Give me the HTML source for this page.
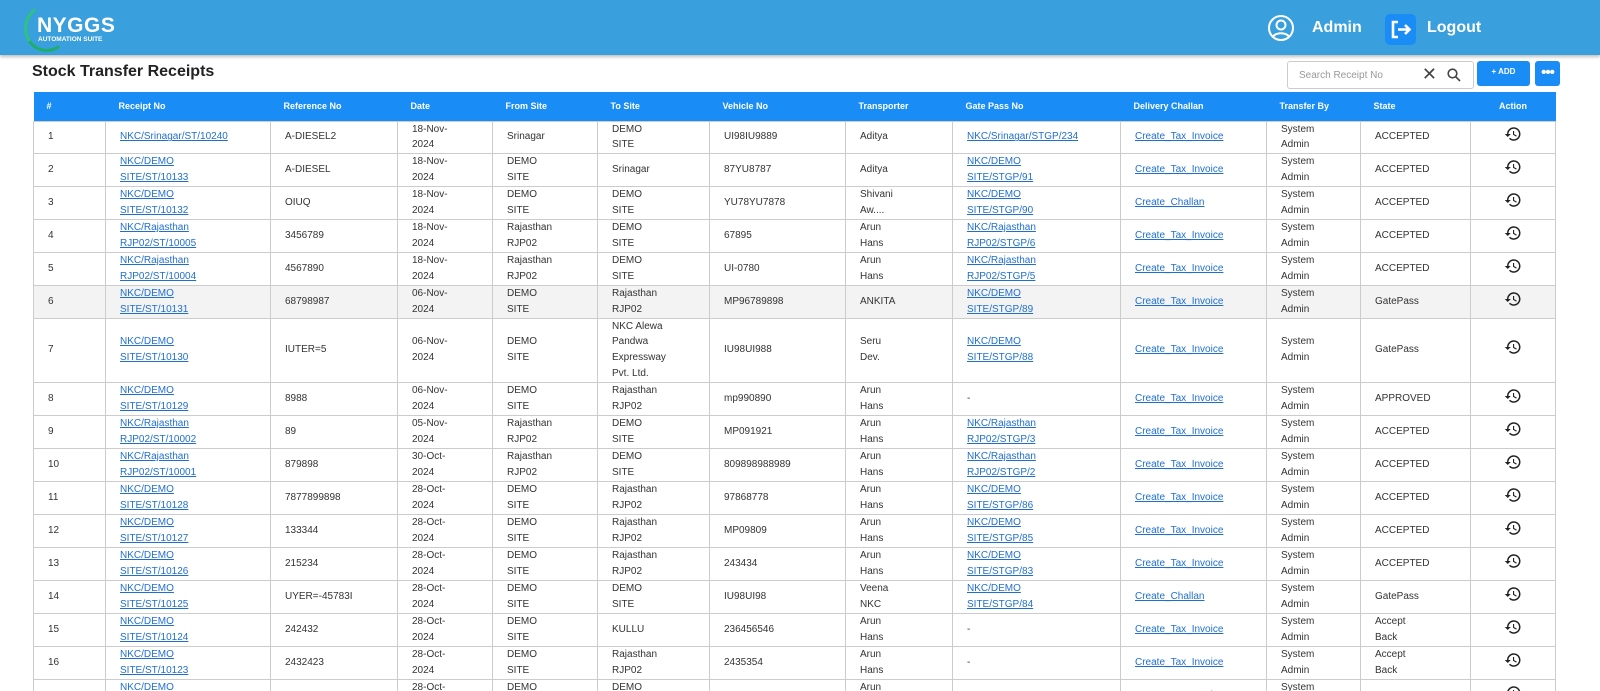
<!DOCTYPE html>
<html style="overflow:hidden;width:1600px;height:691px"><head><meta charset="utf-8"><style>
*{box-sizing:border-box;margin:0;padding:0}
body{width:1600px;height:691px;overflow:hidden;background:#fff;font-family:"Liberation Sans",Arial,sans-serif;position:relative}
.hdr{position:absolute;left:0;top:0;width:1600px;height:55px;background:#3a9fdd;box-shadow:0 2px 3px rgba(0,0,0,.25)}
.logo{position:absolute;left:37px;top:14px;color:#fff;font-weight:bold;font-size:21px;letter-spacing:.5px}
.logo small{display:block;font-size:6.5px;letter-spacing:0;margin-top:-2px;margin-left:1px}
.ring{position:absolute;left:24px;top:4px;width:46px;height:48px;border-radius:50%;border:3px solid transparent;border-left-color:#2ec27e;border-bottom-color:#1fae6a;transform:rotate(10deg)}
.ttl{position:absolute;left:32px;top:63px;font-size:16px;font-weight:bold;color:#222}
.search{position:absolute;left:1287px;top:61px;width:187px;height:28px;border:1px solid #ccc;border-radius:3px;font-size:10px;color:#999;padding:8px 11px}
.add{position:absolute;left:1477px;top:61px;width:53px;height:25px;background:#1a8cf5;border-radius:3px;color:#fff;font-size:8px;font-weight:bold;text-align:center;line-height:22px}
.more{position:absolute;left:1535px;top:61px;width:25px;height:25px;background:#1a8cf5;border-radius:3px;color:#fff;font-size:15px;text-align:center;line-height:24px;letter-spacing:-1px;font-weight:bold}
table{position:absolute;left:33px;top:92px;width:1522px;border-collapse:collapse;table-layout:fixed;font-size:10px;color:#333}
th{background:#1a8cf5;color:#fff;font-size:9px;font-weight:bold;text-align:left;height:29px;padding:0 0 0 13px}
td{border:1px solid #ccc;padding:0 0 0 14px;line-height:15.8px;vertical-align:middle}
tr.g td{background:#f3f3f3}
a{color:#1f6fd0;text-decoration:underline}
td.ic{text-align:center;padding:0}
</style></head><body>
<div class="hdr">
<div class="ring"></div>
<div class="logo">NYGGS<small>AUTOMATION SUITE</small></div>
<svg style="position:absolute;left:1267px;top:14px" width="28" height="28" viewBox="0 0 28 28" fill="none" stroke="#fff" stroke-width="2"><circle cx="14" cy="14" r="12"/><circle cx="14" cy="11" r="4.5"/><path d="M6 23c2-5 14-5 16 0"/></svg>
<div style="position:absolute;left:1312px;top:19px;color:#fff;font-weight:bold;font-size:16px">Admin</div>
<div style="position:absolute;left:1385px;top:14px;width:31px;height:31px;background:#1a8cf5;border-radius:5px"><svg width="31" height="31" viewBox="0 0 31 31" fill="none" stroke="#fff" stroke-width="2.6"><path d="M13 8H8v15h5"/><path d="M13 15.5h11M20 11l4.5 4.5L20 20"/></svg></div>
<div style="position:absolute;left:1427px;top:19px;color:#fff;font-weight:bold;font-size:16px">Logout</div>
</div>
<div class="ttl">Stock Transfer Receipts</div>
<div class="search">Search Receipt No<span style="position:absolute;right:36px;top:3px;color:#444;font-size:18px;line-height:18px">✕</span><svg style="position:absolute;right:12px;top:6px" width="14" height="14" viewBox="0 0 14 14" fill="none" stroke="#444" stroke-width="1.6"><circle cx="5.5" cy="5.5" r="4.3"/><path d="M8.8 8.8L13 13"/></svg></div>
<div class="add">+ ADD</div>
<div class="more">•••</div>
<table>
<colgroup><col style="width:72px"><col style="width:165px"><col style="width:127px"><col style="width:95px"><col style="width:105px"><col style="width:112px"><col style="width:136px"><col style="width:107px"><col style="width:168px"><col style="width:146px"><col style="width:94px"><col style="width:110px"><col style="width:85px"></colgroup>
<tr><th>#</th><th>Receipt No</th><th>Reference No</th><th>Date</th><th>From Site</th><th>To Site</th><th>Vehicle No</th><th>Transporter</th><th>Gate Pass No</th><th>Delivery Challan</th><th>Transfer By</th><th>State</th><th style="text-align:center;padding:0">Action</th></tr>
<tbody id="tb"></tbody>
</table>
<script>
var H='<svg width="18" height="18" viewBox="0 0 24 24"><path fill="#222" d="M13 3a9 9 0 0 0-9 9H1l4 4 4-4H6a7 7 0 1 1 2.05 4.95l-1.42 1.42A9 9 0 1 0 13 3zm-1 5v5l4.25 2.52.77-1.28-3.52-2.09V8z"/></svg>';
var R=[
[31,"1","NKC/Srinagar/ST/10240","A-DIESEL2","18-Nov-<br>2024","Srinagar","DEMO<br>SITE","UI98IU9889","Aditya","NKC/Srinagar/STGP/234","Create_Tax_Invoice","ACCEPTED"],
[33,"2","NKC/DEMO<br>SITE/ST/10133","A-DIESEL","18-Nov-<br>2024","DEMO<br>SITE","Srinagar","87YU8787","Aditya","NKC/DEMO<br>SITE/STGP/91","Create_Tax_Invoice","ACCEPTED"],
[33,"3","NKC/DEMO<br>SITE/ST/10132","OIUQ","18-Nov-<br>2024","DEMO<br>SITE","DEMO<br>SITE","YU78YU7878","Shivani<br>Aw....","NKC/DEMO<br>SITE/STGP/90","Create_Challan","ACCEPTED"],
[32,"4","NKC/Rajasthan<br>RJP02/ST/10005","3456789","18-Nov-<br>2024","Rajasthan<br>RJP02","DEMO<br>SITE","67895","Arun<br>Hans","NKC/Rajasthan<br>RJP02/STGP/6","Create_Tax_Invoice","ACCEPTED"],
[33,"5","NKC/Rajasthan<br>RJP02/ST/10004","4567890","18-Nov-<br>2024","Rajasthan<br>RJP02","DEMO<br>SITE","UI-0780","Arun<br>Hans","NKC/Rajasthan<br>RJP02/STGP/5","Create_Tax_Invoice","ACCEPTED"],
[33,"6","NKC/DEMO<br>SITE/ST/10131","68798987","06-Nov-<br>2024","DEMO<br>SITE","Rajasthan<br>RJP02","MP96789898","ANKITA","NKC/DEMO<br>SITE/STGP/89","Create_Tax_Invoice","GatePass","g"],
[63,"7","NKC/DEMO<br>SITE/ST/10130","IUTER=5","06-Nov-<br>2024","DEMO<br>SITE","NKC Alewa<br>Pandwa<br>Expressway<br>Pvt. Ltd.","IU98UI988","Seru<br>Dev.","NKC/DEMO<br>SITE/STGP/88","Create_Tax_Invoice","GatePass"],
[33,"8","NKC/DEMO<br>SITE/ST/10129","8988","06-Nov-<br>2024","DEMO<br>SITE","Rajasthan<br>RJP02","mp990890","Arun<br>Hans","-","Create_Tax_Invoice","APPROVED"],
[33,"9","NKC/Rajasthan<br>RJP02/ST/10002","89","05-Nov-<br>2024","Rajasthan<br>RJP02","DEMO<br>SITE","MP091921","Arun<br>Hans","NKC/Rajasthan<br>RJP02/STGP/3","Create_Tax_Invoice","ACCEPTED"],
[33,"10","NKC/Rajasthan<br>RJP02/ST/10001","879898","30-Oct-<br>2024","Rajasthan<br>RJP02","DEMO<br>SITE","809898988989","Arun<br>Hans","NKC/Rajasthan<br>RJP02/STGP/2","Create_Tax_Invoice","ACCEPTED"],
[33,"11","NKC/DEMO<br>SITE/ST/10128","7877899898","28-Oct-<br>2024","DEMO<br>SITE","Rajasthan<br>RJP02","97868778","Arun<br>Hans","NKC/DEMO<br>SITE/STGP/86","Create_Tax_Invoice","ACCEPTED"],
[33,"12","NKC/DEMO<br>SITE/ST/10127","133344","28-Oct-<br>2024","DEMO<br>SITE","Rajasthan<br>RJP02","MP09809","Arun<br>Hans","NKC/DEMO<br>SITE/STGP/85","Create_Tax_Invoice","ACCEPTED"],
[33,"13","NKC/DEMO<br>SITE/ST/10126","215234","28-Oct-<br>2024","DEMO<br>SITE","Rajasthan<br>RJP02","243434","Arun<br>Hans","NKC/DEMO<br>SITE/STGP/83","Create_Tax_Invoice","ACCEPTED"],
[33,"14","NKC/DEMO<br>SITE/ST/10125","UYER=-45783I","28-Oct-<br>2024","DEMO<br>SITE","DEMO<br>SITE","IU98UI98","Veena<br>NKC","NKC/DEMO<br>SITE/STGP/84","Create_Challan","GatePass"],
[33,"15","NKC/DEMO<br>SITE/ST/10124","242432","28-Oct-<br>2024","DEMO<br>SITE","KULLU","236456546","Arun<br>Hans","-","Create_Tax_Invoice","Accept<br>Back"],
[33,"16","NKC/DEMO<br>SITE/ST/10123","2432423","28-Oct-<br>2024","DEMO<br>SITE","Rajasthan<br>RJP02","2435354","Arun<br>Hans","-","Create_Tax_Invoice","Accept<br>Back"],
[33,"17","NKC/DEMO<br>SITE/ST/10122","1234","28-Oct-<br>2024","DEMO<br>SITE","DEMO<br>SITE","1234","Arun<br>Hans","-","Create_Tax_Invoice","ACCEPTED"]];
var s="";R.forEach(function(r){var gp=r[9]=="-"?"-":'<a>'+r[9]+'</a>';
s+='<tr'+(r[12]?' class="g"':'')+' style="height:'+r[0]+'px"><td>'+r[1]+'</td><td><a>'+r[2]+'</a></td><td>'+r[3]+'</td><td>'+r[4]+'</td><td>'+r[5]+'</td><td>'+r[6]+'</td><td>'+r[7]+'</td><td>'+r[8]+'</td><td>'+gp+'</td><td><a>'+r[10]+'</a></td><td>System<br>Admin</td><td>'+r[11]+'</td><td class="ic">'+H+'</td></tr>';});
document.getElementById("tb").innerHTML=s;
</script>
</body></html>
